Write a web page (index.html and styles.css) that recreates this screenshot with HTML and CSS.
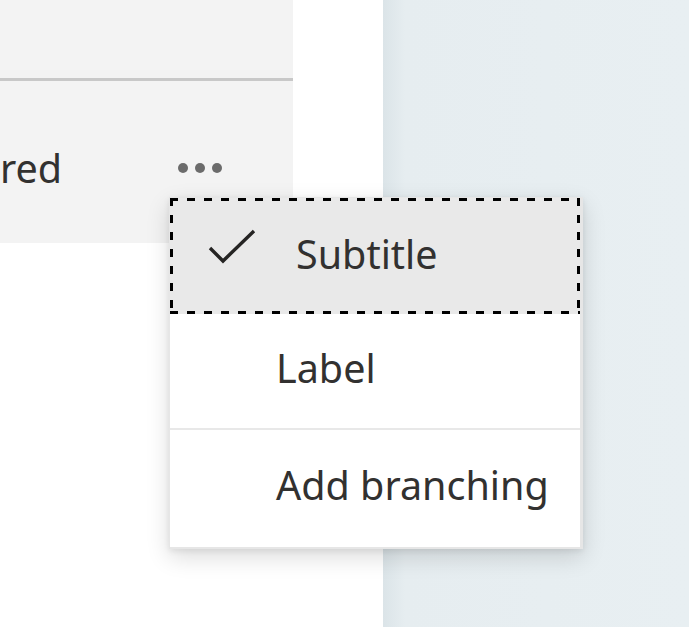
FILE: index.html
```html
<!DOCTYPE html>
<html lang="en">
<head>
    <meta charset="UTF-8">
    <title>Question options menu</title>
    <link rel="stylesheet" href="styles.css">
</head>
<body>
    <div class="canvas">
        <div class="card">
            <div class="card-head"></div>
            <div class="card-row">
                <span class="card-label">red</span>
                <button class="more" aria-label="More options">
                    <span></span><span></span><span></span>
                </button>
            </div>
        </div>
    </div>
    <div class="side"></div>

    <!-- context menu opened from the "..." button -->
    <ul class="menu" role="menu">
        <li class="menu-item checked focused" role="menuitemcheckbox">
            <svg class="check" width="48" height="36" viewBox="0 0 48 36">
                <path d="M2 19 L15 32 L46 2" fill="none" stroke="#252423" stroke-width="3.4"/>
            </svg>
            <span>Subtitle</span>
        </li>
        <li class="menu-item" role="menuitem"><span>Label</span></li>
        <li class="menu-item divided" role="menuitem"><span>Add branching</span></li>
    </ul>
</body>
</html>
```

FILE: styles.css
```css
body {
    margin: 0;
    width: 689px;
    height: 627px;
    display: flex;
    overflow: hidden;
    font-family: 'Noto Sans', 'Open Sans', sans-serif;
    color: #323130;
    background: #fff;
}
.canvas {
    width: 383px;
    flex-shrink: 0;
    background: #fff;
}
.card {
    width: 293px;
    height: 243px;
    background: #f3f3f3;
}
.card-head {
    height: 78px;
    border-bottom: 3px solid #c8c8c8;
}
.card-row {
    display: flex;
    align-items: flex-start;
}
.card-label {
    font-size: 39.5px;
    line-height: 1;
    margin-top: 68px;
}
.more {
    display: flex;
    gap: 7px;
    margin-left: 116px;
    margin-top: 82px;
    padding: 0;
    border: none;
    background: none;
}
.more span {
    width: 10px;
    height: 10px;
    border-radius: 50%;
    background: #6b6b6b;
}
.side {
    flex: 1;
    background: linear-gradient(to right, #dbe4e8, #e6edf0 22px, #e8eff2);
}
.menu {
    position: absolute;
    left: 169px;
    top: 197px;
    width: 410px;
    margin: 0;
    padding: 0;
    list-style: none;
    background: #fff;
    border: 1px solid #e6e6e6;
    border-right-width: 3px;
    border-bottom-width: 2px;
    box-shadow: 0 8px 22px rgba(0, 0, 0, 0.14), 0 2px 6px rgba(0, 0, 0, 0.08);
}
.menu-item {
    display: flex;
    align-items: center;
    height: 114px;
    padding-left: 106px;
    box-sizing: border-box;
    font-size: 39.5px;
    line-height: 1;
}
.menu-item span {
    margin-top: -5px;
}
.menu-item.divided {
    height: 119px;
    border-top: 2px solid #e8e8e8;
}
/* keyboard focus ring: 8px dashes, 9px gaps */
.menu-item.focused {
    height: 116px;
    background:
        repeating-linear-gradient(to right, #000 0 8px, transparent 8px 17px) top left / 100% 3px no-repeat,
        repeating-linear-gradient(to right, #000 0 8px, transparent 8px 17px) bottom left / 100% 3px no-repeat,
        repeating-linear-gradient(to bottom, #000 0 8px, transparent 8px 17px) top left / 3px 100% no-repeat,
        repeating-linear-gradient(to bottom, #000 0 8px, transparent 8px 17px) top right / 3px 100% no-repeat,
        #e9e9e9;
}
.menu-item.focused span {
    margin-top: -3px;
}
.menu-item.checked {
    padding-left: 38px;
}
.check {
    margin-right: 40px;
    margin-top: -18px;
}
```
